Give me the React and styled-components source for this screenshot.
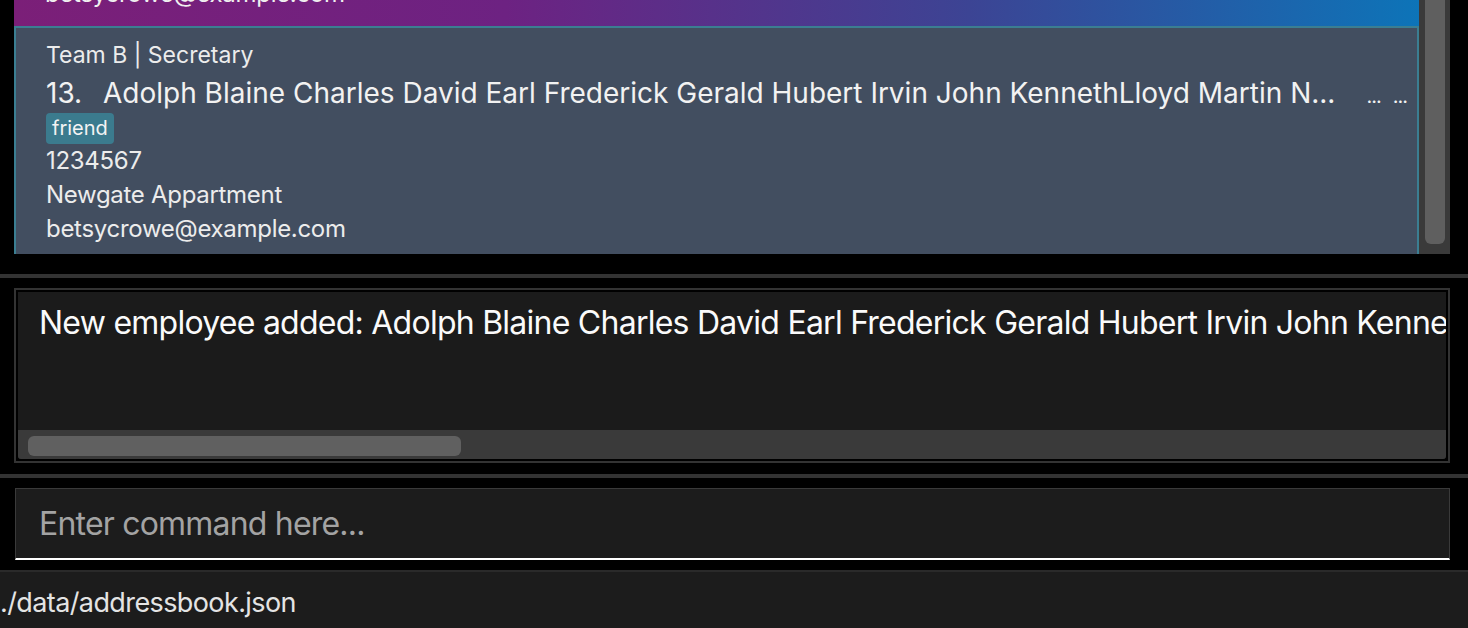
import styled, { createGlobalStyle } from 'styled-components';

const GlobalStyle = createGlobalStyle`
  html, body {
    margin: 0;
    padding: 0;
    background: #000;
    overflow: hidden;
  }
  body {
    font-family: Inter, "Open Sans", "Liberation Sans", sans-serif;
    color: #e8e8e8;
  }
`;

const Window = styled.div`
  width: 1468px;
  height: 628px;
  display: flex;
  flex-direction: column;
  background: #000;
`;

const ListPane = styled.div`
  height: 274px;
  padding: 0 18px 0 14px;
  box-sizing: border-box;
`;

const ListFrame = styled.div`
  display: flex;
  height: 254px;
`;

const ListBody = styled.div`
  flex: 1;
  min-width: 0;
  overflow: hidden;
  display: flex;
  flex-direction: column;
`;

const PrevCard = styled.div`
  height: 26px;
  flex: none;
  background: linear-gradient(90deg, #7b1f78 0%, #6d2282 35%, #3c4494 68%, #0d74b8 100%);
  display: flex;
  align-items: flex-end;
  padding-left: 31px;
  overflow: hidden;
  font-size: 24px;
  line-height: 34px;
  letter-spacing: -0.3px;
  color: #f0f0f0;
`;

const PrevText = styled.div`
  margin-bottom: 15px;
`;

const Card = styled.div`
  flex: 1;
  background: #424e60;
  border: 2px solid #3b7e92;
  border-bottom: none;
  padding: 12px 0 0 30px;
  display: flex;
  flex-direction: column;
  align-items: flex-start;
`;

const Role = styled.div`
  font-size: 23px;
  line-height: 30px;
  color: #ececec;
`;

const NameRow = styled.div`
  margin-top: 6px;
  display: flex;
  align-items: baseline;
  width: 100%;
  font-size: 28px;
  line-height: 34px;
  color: #f2f2f2;
`;

const Index = styled.span`
  flex: none;
  width: 57px;
`;

const Name = styled.span`
  flex: 1;
  min-width: 0;
  white-space: nowrap;
  overflow: hidden;
  text-overflow: ellipsis;
`;

const Dots = styled.span`
  flex: none;
  font-size: 20px;
  margin-right: ${p => p.$mr || 0}px;
  letter-spacing: -1px;
`;

const Tag = styled.span`
  background: #3b7b8e;
  border-radius: 4px;
  padding: 0 6px;
  font-size: 20px;
  line-height: 31px;
  color: #f4f4f4;
`;

const Field = styled.div`
  font-size: 24px;
  line-height: 34px;
  letter-spacing: -0.3px;
  color: #ececec;
`;

const VScroll = styled.div`
  width: 31px;
  flex: none;
  background: #3a3a3a;
  display: flex;
  justify-content: center;
  padding-bottom: 10px;
  box-sizing: border-box;
`;

const VThumb = styled.div`
  width: 20px;
  background: #5f5f5f;
  border-radius: 0 0 6px 6px;
  margin-left: 1px;
`;

const Divider = styled.div`
  height: 4px;
  background: #333;
  flex: none;
`;

const ResultPane = styled.div`
  height: 196px;
  padding: 10px 18px 11px 14px;
  box-sizing: border-box;
`;

const ResultFrame = styled.div`
  height: 100%;
  border: 2px solid #333;
  padding: 2px;
  box-sizing: border-box;
`;

const ResultBox = styled.div`
  height: 100%;
  background: #1b1b1b;
  border-radius: 0 0 3px 3px;
  display: flex;
  flex-direction: column;
  overflow: hidden;
`;

const ResultText = styled.div`
  flex: 1;
  padding: 11px 0 0 21px;
  font-size: 32px;
  line-height: 40px;
  letter-spacing: -0.75px;
  color: #fafafa;
  white-space: nowrap;
  overflow: hidden;
`;

const HScroll = styled.div`
  height: 29px;
  background: #3a3a3a;
  padding: 6px 10px 3px 10px;
  box-sizing: border-box;
`;

const HThumb = styled.div`
  width: 433px;
  height: 20px;
  background: #606060;
  border-radius: 6px;
`;

const CommandPane = styled.div`
  height: 92px;
  padding: 10px 18px 0 15px;
  box-sizing: border-box;
`;

const CommandInput = styled.input`
  width: 100%;
  height: 72px;
  box-sizing: border-box;
  background: #1c1c1c;
  border: 1px solid #3a3a3a;
  border-bottom: 2px solid #ffffff;
  outline: none;
  padding: 0 0 0 23px;
  font-family: inherit;
  font-size: 32px;
  letter-spacing: -0.8px;
  color: #fff;
  &::placeholder {
    color: #a3a3a3;
  }
`;

const StatusBar = styled.div`
  flex: 1;
  background: #1c1c1c;
  border-top: 2px solid #2a2a2a;
  display: flex;
  align-items: center;
  font-size: 27px;
  letter-spacing: -0.6px;
  color: #e4e4e4;
  padding-top: 5px;
`;

export default function App() {
  return (
    <>
      <GlobalStyle />
      <Window>
        <ListPane>
          <ListFrame>
            <ListBody>
              <PrevCard>
                <PrevText>betsycrowe@example.com</PrevText>
              </PrevCard>
              <Card>
                <Role>Team B | Secretary</Role>
                <NameRow>
                  <Index>13.</Index>
                  <Name>Adolph Blaine Charles David Earl Frederick Gerald Hubert Irvin John KennethLloyd Martin N...</Name>
                  <Dots $mr={12}>...</Dots>
                  <Dots $mr={10}>...</Dots>
                </NameRow>
                <Tag>friend</Tag>
                <Field>1234567</Field>
                <Field>Newgate Appartment</Field>
                <Field>betsycrowe@example.com</Field>
              </Card>
            </ListBody>
            <VScroll>
              <VThumb />
            </VScroll>
          </ListFrame>
        </ListPane>
        <Divider />
        <ResultPane>
          <ResultFrame>
            <ResultBox>
              <ResultText>New employee added: Adolph Blaine Charles David Earl Frederick Gerald Hubert Irvin John KennethLloyd Martin Nero Oliver Paul Quincy</ResultText>
              <HScroll>
                <HThumb />
              </HScroll>
            </ResultBox>
          </ResultFrame>
        </ResultPane>
        <Divider />
        <CommandPane>
          <CommandInput placeholder="Enter command here..." />
        </CommandPane>
        <StatusBar>./data/addressbook.json</StatusBar>
      </Window>
    </>
  );
}
